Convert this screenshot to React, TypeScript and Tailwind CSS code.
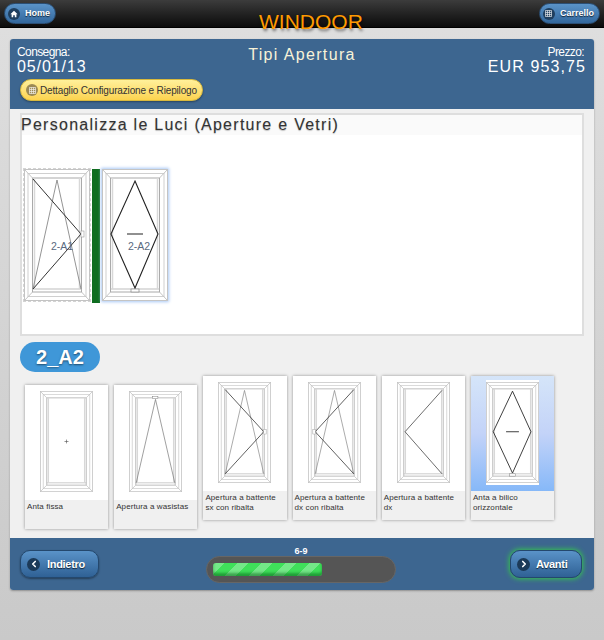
import React from 'react';
import { ChevronLeft, ChevronRight } from 'lucide-react';

type Kind = 'fissa' | 'wasistas' | 'sx' | 'dx' | 'battente' | 'bilico';

const options: { kind: Kind; label: string[]; low?: boolean; selected?: boolean }[] = [
  { kind: 'fissa', label: ['Anta fissa'], low: true },
  { kind: 'wasistas', label: ['Apertura a wasistas'], low: true },
  { kind: 'sx', label: ['Apertura a battente', 'sx con ribalta'] },
  { kind: 'dx', label: ['Apertura a battente', 'dx con ribalta'] },
  { kind: 'battente', label: ['Apertura a battente', 'dx'] },
  { kind: 'bilico', label: ['Anta a bilico', 'orizzontale'], selected: true },
];

const WindowDrawing = ({ kind, className }: { kind: Kind; className: string }) => (
  <svg viewBox="0 0 66 132" preserveAspectRatio="none" className={className}>
    <rect x="0" y="0" width="66" height="132" fill="#fff" />
    <g fill="none" stroke="#c4c4c4" strokeWidth="1">
      <rect x="0.5" y="0.5" width="65" height="131" />
      <rect x="4" y="4.5" width="58" height="123" stroke="#cfcfcf" />
      <rect x="8.5" y="9" width="49" height="114" stroke="#aaa" />
      <path d="M0.5 0.5L8.5 9M65.5 0.5L57.5 9M0.5 131.5L8.5 123M65.5 131.5L57.5 123" />
      <path d="M8.5 120H57.5" stroke="#bdbdbd" />
      <path d="M10.5 9V120M55.5 9V120" stroke="#d8d8d8" strokeWidth="1.5" />
    </g>
    {kind === 'fissa' && <path d="M30.5 66H35.5M33 63.5V68.5" stroke="#555" strokeWidth="0.8" fill="none" />}
    {kind === 'wasistas' && (
      <>
        <path d="M33 11L9 120M33 11L57 120" stroke="#777" strokeWidth="0.9" fill="none" />
        <rect x="29" y="7" width="7" height="3" fill="#fff" stroke="#777" strokeWidth="0.6" />
      </>
    )}
    {kind === 'sx' && (
      <>
        <path d="M33 11L9 120M33 11L57 120" stroke="#888" strokeWidth="0.9" fill="none" />
        <path d="M9 10L57 65L9 120" stroke="#333" strokeWidth="1" fill="none" />
        <rect x="57" y="62" width="3" height="6" fill="#fff" stroke="#999" strokeWidth="0.6" />
      </>
    )}
    {kind === 'dx' && (
      <>
        <path d="M33 11L9 120M33 11L57 120" stroke="#888" strokeWidth="0.9" fill="none" />
        <path d="M57 10L9 65L57 120" stroke="#333" strokeWidth="1" fill="none" />
        <rect x="6" y="62" width="3" height="6" fill="#fff" stroke="#999" strokeWidth="0.6" />
      </>
    )}
    {kind === 'battente' && <path d="M56 11L10 65L56 120" stroke="#444" strokeWidth="1" fill="none" />}
    {kind === 'bilico' && (
      <>
        <path d="M33 12L56 65L33 119L9 65Z" stroke="#222" strokeWidth="1.1" fill="none" />
        <path d="M25 65H41" stroke="#222" strokeWidth="1.1" />
        <rect x="29" y="120" width="8" height="3" fill="#fff" stroke="#777" strokeWidth="0.6" />
      </>
    )}
  </svg>
);

const GridIcon = ({ dark }: { dark?: boolean }) => (
  <span className={`flex h-[12px] w-[12px] items-center justify-center rounded-full ${dark ? 'bg-[#1f3f5f]' : 'bg-[#9b8a55]'}`}>
    <svg viewBox="0 0 8 8" className="h-[7px] w-[7px]" fill="none" stroke="#fff" strokeWidth="0.8" opacity="0.9">
      <path d="M0.5 0.5H7.5V7.5H0.5ZM0.5 2.8H7.5M0.5 5.2H7.5M2.8 0.5V7.5M5.2 0.5V7.5" />
    </svg>
  </span>
);

const HeaderButton = ({ label, icon }: { label: string; icon: React.ReactNode }) => (
  <button className="flex h-[21px] items-center gap-[5px] rounded-full border border-[#2b4f75] bg-gradient-to-b from-[#5a93c8] to-[#33689d] pr-[5px] pl-[3px] text-[9px] font-bold text-white [text-shadow:0_1px_1px_#123]">
    {icon}
    {label}
  </button>
);

const FooterButton = ({ label, next }: { label: string; next?: boolean }) => (
  <button className={`flex h-[28px] items-center rounded-[10px] border border-[#24486d] bg-gradient-to-b from-[#5a93c8] to-[#2f6195] text-[11px] font-bold tracking-[-0.3px] text-white [text-shadow:0_1px_1px_#123] ${next ? 'w-[72px] gap-[6px] pl-[6px] shadow-[0_0_5px_1px_#35c24f]' : 'w-[79px] gap-[7px] pl-[6px] shadow-[0_1px_2px_rgba(0,0,0,0.4)]'}`}>
    <span className="flex h-[13px] w-[13px] items-center justify-center rounded-full bg-[#1c3a58]">
      {next ? <ChevronRight size={10} strokeWidth={4} /> : <ChevronLeft size={10} strokeWidth={4} />}
    </span>
    {label}
  </button>
);

const App = () => {
  return (
    <div className="h-[640px] w-[604px] overflow-hidden bg-gradient-to-b from-[#dfdfdf] to-[#c9c9c9] font-['Liberation_Sans',Arial,sans-serif]">
      {/* top bar */}
      <header className="relative flex h-[28px] items-start justify-between border-b border-black bg-gradient-to-b from-[#3c3c3c] to-[#0c0c0c] px-1 pt-[3px]">
        <HeaderButton
          label="Home"
          icon={
            <span className="flex h-[12px] w-[12px] items-center justify-center rounded-full bg-[#1f3f5f]">
              <svg viewBox="0 0 10 10" className="h-[8px] w-[8px]" fill="#fff">
                <path d="M5 1L9.5 5.2H8V9H6V6.5H4V9H2V5.2H0.5Z" />
              </svg>
            </span>
          }
        />
        <span className="absolute top-[9px] left-[259px] text-[21px] leading-[26px] text-[#ff9a00] [text-shadow:1px_2px_3px_rgba(0,0,0,0.55)]">
          WINDOOR
        </span>
        <HeaderButton label="Carrello" icon={<GridIcon dark />} />
      </header>

      <main className="mx-[10px] mt-[11px] h-[551px] overflow-hidden rounded-[3px] bg-[#f0f0f0] shadow-[0_1px_2px_rgba(0,0,0,0.3)]">
        {/* riepilogo */}
        <section className="h-[70px] bg-[#3d6690] px-[7px] pt-[6px] text-white">
          <div className="flex items-start">
            <div className="flex-1">
              <p className="text-[12px] leading-[14px] tracking-[-0.6px]">Consegna:</p>
              <p className="text-[16px] leading-[16px] tracking-[0.9px]">05/01/13</p>
            </div>
            <p className="pt-[1px] text-[16px] leading-[18px] tracking-[1.35px] text-[#f8f3d8]">Tipi Apertura</p>
            <div className="flex-1 text-right">
              <p className="pr-[3px] text-[12px] leading-[14px] tracking-[-0.6px]">Prezzo:</p>
              <p className="pr-[1px] text-[16px] leading-[16px] tracking-[1.1px]">EUR 953,75</p>
            </div>
          </div>
          <button className="mt-[4px] ml-[3px] flex h-[22px] w-[183px] items-center gap-[2px] rounded-full border border-[#d8b93f] bg-gradient-to-b from-[#fff09a] to-[#fcd34d] pl-[5px] text-[10px] tracking-[-0.15px] whitespace-nowrap text-[#333] shadow-[0_1px_2px_rgba(0,0,0,0.35)]">
            <GridIcon />
            Dettaglio Configurazione e Riepilogo
          </button>
        </section>

        {/* area luci */}
        <section className="px-[10px] pt-[4px]">
          <div className="h-[223px] border-2 border-[#dedede] bg-white">
            <h2 className="h-[20px] bg-[#fafafa] text-[16px] leading-[19px] tracking-[1.27px] text-[#333] [text-shadow:0_1px_1px_rgba(0,0,0,0.25)]">
              <span className="-ml-[1px]">Personalizza le Luci (Aperture e Vetri)</span>
            </h2>
            <div className="mt-[34px] flex items-stretch pl-[2px]">
              <div className="relative h-[132px] w-[66px] outline-1 outline-dashed outline-[#d4d4d4]">
                <WindowDrawing kind="sx" className="h-full w-full" />
                <span className="absolute top-[71px] left-[27px] text-[10.5px] leading-[13px] text-[#5a6a80]">2-A1</span>
              </div>
              <div className="ml-[2px] h-[134px] w-[8px] bg-[#0f6d20]" />
              <div className="relative ml-[2px] h-[132px] w-[66px] shadow-[0_0_3px_1px_#a9c8f5]">
                <WindowDrawing kind="bilico" className="h-full w-full" />
                <span className="absolute top-[71px] left-[26px] text-[10.5px] leading-[13px] text-[#5a6a80]">2-A2</span>
              </div>
            </div>
          </div>
        </section>

        {/* scelta apertura */}
        <section className="px-[10px] pt-[6px]">
          <div className="flex h-[30px] w-[80px] items-center justify-center rounded-full bg-[#3f97d8] text-[20px] font-bold text-white [text-shadow:0_1px_2px_rgba(0,0,0,0.5)]">
            2_A2
          </div>
          <div className="mt-[4px] flex gap-[6px] pl-[5px]">
            {options.map((o) => (
              <div
                key={o.kind}
                className={`h-[144px] w-[83.2px] shrink-0 bg-[#f0f0f0] shadow-[0_0_3px_rgba(0,0,0,0.4)] ${o.low ? 'mt-[9px]' : ''}`}
              >
                <div
                  className={`flex h-[115px] items-start justify-center ${o.selected ? 'bg-gradient-to-b from-[#d5e5f9] via-[#c3d3f8] to-[#86b8f8] pt-[4px]' : 'bg-white pt-[6px]'}`}
                >
                  <div className={o.selected ? 'bg-white py-[2px]' : ''}>
                    <WindowDrawing kind={o.kind} className="block h-[101px] w-[53px]" />
                  </div>
                </div>
                <div className="pt-[2px] pl-[2px] text-[8px] leading-[9.5px] tracking-[0.1px] text-[#333]">
                  {o.label.map((line) => (
                    <p key={line}>{line}</p>
                  ))}
                </div>
              </div>
            ))}
          </div>
        </section>
      </main>

      {/* barra avanzamento */}
      <footer className="relative mx-[10px] -mt-[52px] flex h-[52px] items-start rounded-b-[3px] bg-[#3d6690] pt-[12px] pr-[12px] pl-[10px]">
        <div className="flex-1">
          <FooterButton label="Indietro" />
        </div>
        <div className="-mt-[3px] flex w-[190px] flex-col items-center">
          <span className="text-[9px] leading-[9px] font-bold text-white">6-9</span>
          <div className="h-[27px] w-[190px] rounded-full border border-[#666] bg-[#555] px-[6px] py-[6px]">
            <div className="h-[13px] w-[109px] rounded-[3px] bg-[#3fe05a] bg-[repeating-linear-gradient(135deg,rgba(255,255,255,0.28)_0_8px,transparent_8px_17px)] shadow-[inset_0_-3px_3px_rgba(0,90,20,0.5)]" />
          </div>
        </div>
        <div className="flex flex-1 justify-end">
          <FooterButton label="Avanti" next />
        </div>
      </footer>
    </div>
  );
};

export default App;
